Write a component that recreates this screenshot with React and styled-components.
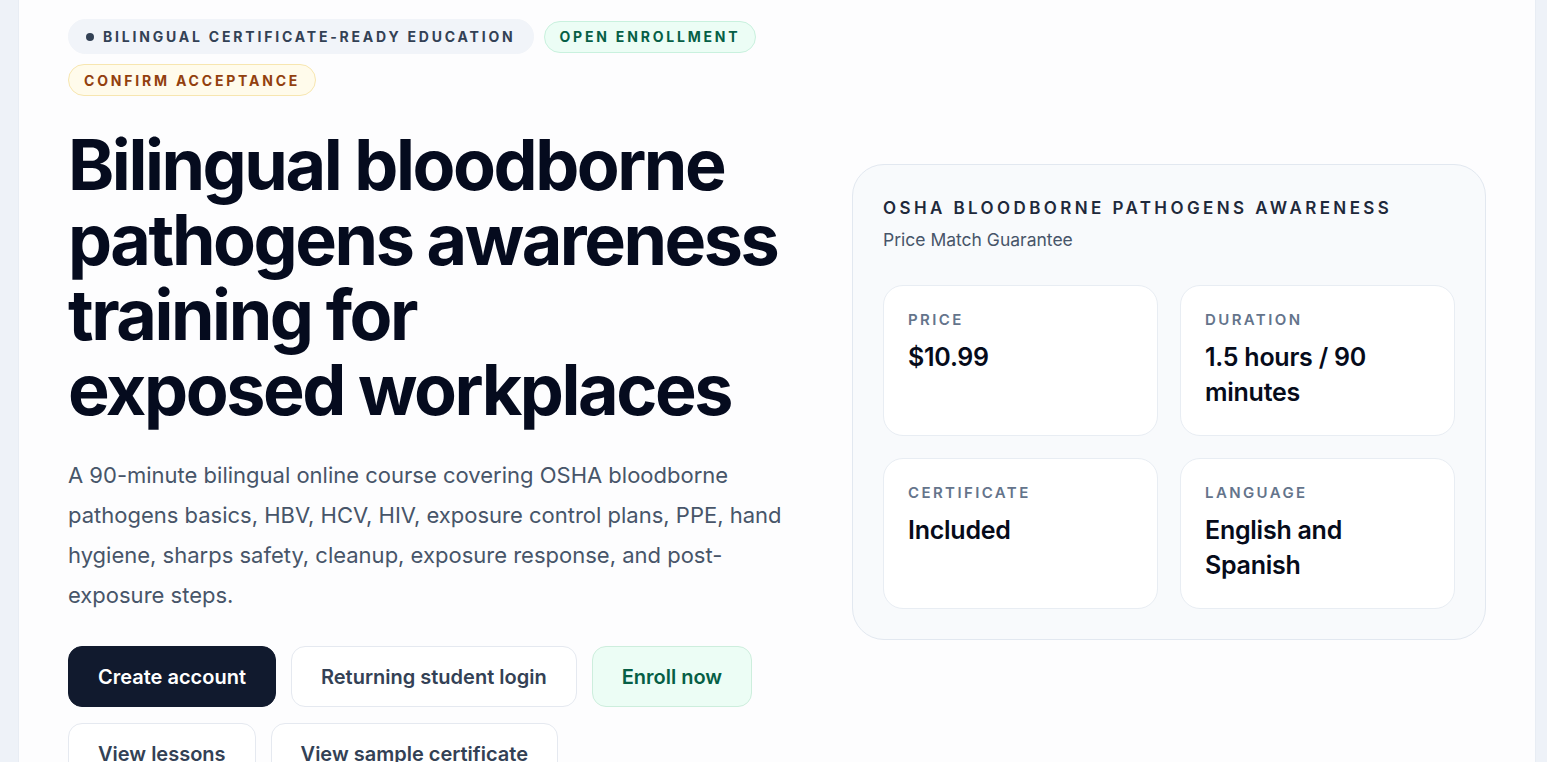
import React from "react";
import styled, { createGlobalStyle } from "styled-components";

const GlobalStyle = createGlobalStyle`
  * { box-sizing: border-box; }
  body {
    margin: 0;
    background: #eef2f8;
    font-family: Inter, "Noto Sans", "Liberation Sans", sans-serif;
    -webkit-font-smoothing: antialiased;
  }
`;

const Page = styled.div`
  padding: 0 11px 40px 18px;
`;

const Shell = styled.section`
  background: #fdfdfe;
  border: 1px solid #e8edf4;
  border-top: none;
  border-radius: 0 0 32px 32px;
  padding: 19px 49px 40px;
`;

const Hero = styled.div`
  display: grid;
  grid-template-columns: minmax(0, 1fr) 634px;
  column-gap: 60px;
  align-items: center;
`;

const Intro = styled.div`
  display: flex;
  flex-direction: column;
`;

const ChipRow = styled.div`
  display: flex;
  flex-wrap: wrap;
  gap: 10px;
  align-items: center;
`;

const tones = {
  slate: { bg: "#f1f4f9", border: "#f1f4f9", fg: "#334155" },
  green: { bg: "#ecfdf5", border: "#c9f1de", fg: "#065f46" },
  amber: { bg: "#fffbeb", border: "#f7e6b0", fg: "#92400e" },
};

const Chip = styled.span`
  display: inline-flex;
  align-items: center;
  gap: 9px;
  height: ${(p) => (p.$tone === "slate" ? "35px" : "32px")};
  padding: 0 ${(p) => (p.$tone === "slate" ? "17px" : "15px")};
  border-radius: 999px;
  background: ${(p) => tones[p.$tone].bg};
  border: 1px solid ${(p) => tones[p.$tone].border};
  color: ${(p) => tones[p.$tone].fg};
  font-size: 14px;
  font-weight: 700;
  letter-spacing: 0.2em;
  text-transform: uppercase;
  white-space: nowrap;
`;

const Dot = styled.span`
  width: 8px;
  height: 8px;
  border-radius: 50%;
  background: #334155;
`;

const Title = styled.h1`
  margin: 31px 0 0;
  font-size: 70px;
  line-height: 75px;
  font-weight: 700;
  letter-spacing: -0.035em;
  color: #050b1e;
`;

const Lead = styled.p`
  margin: 28px 0 0;
  font-size: 22px;
  line-height: 40px;
  color: #475569;
`;

const Actions = styled.div`
  display: flex;
  flex-wrap: wrap;
  gap: 16px 15px;
  margin-top: 31px;
  max-width: 700px;
`;

const buttonTones = {
  dark: { bg: "#111a2e", border: "#111a2e", fg: "#ffffff" },
  light: { bg: "#ffffff", border: "#e5e9f0", fg: "#334155" },
  mint: { bg: "#ecfdf5", border: "#cdeedd", fg: "#065f46" },
};

const Button = styled.button`
  height: 61px;
  padding: 0 29px;
  border-radius: 14px;
  font-family: inherit;
  font-size: 20px;
  font-weight: 600;
  cursor: pointer;
  background: ${(p) => buttonTones[p.$tone].bg};
  border: 1px solid ${(p) => buttonTones[p.$tone].border};
  color: ${(p) => buttonTones[p.$tone].fg};
`;

const Panel = styled.aside`
  background: #f8fafc;
  border: 1px solid #e2e8f0;
  border-radius: 32px;
  padding: 30px;
`;

const PanelTitle = styled.h2`
  margin: 0;
  font-size: 17px;
  line-height: 26px;
  font-weight: 600;
  letter-spacing: 0.2em;
  text-transform: uppercase;
  color: #1e293b;
`;

const PanelNote = styled.p`
  margin: 7px 0 0;
  font-size: 17.5px;
  line-height: 24px;
  color: #475569;
`;

const StatGrid = styled.div`
  display: grid;
  grid-template-columns: 1fr 1fr;
  gap: 22px;
  margin-top: 33px;
`;

const Stat = styled.div`
  background: #ffffff;
  border: 1px solid #e8edf3;
  border-radius: 20px;
  padding: 24px;
  min-height: 151px;
`;

const StatLabel = styled.div`
  font-size: 15px;
  line-height: 20px;
  font-weight: 600;
  letter-spacing: 0.16em;
  text-transform: uppercase;
  color: #64748b;
`;

const StatValue = styled.div`
  margin-top: 10px;
  font-size: 25px;
  line-height: 35px;
  font-weight: 600;
  letter-spacing: -0.01em;
  color: #060b1a;
`;

const stats = [
  { label: "Price", value: "$10.99" },
  { label: "Duration", value: "1.5 hours / 90 minutes" },
  { label: "Certificate", value: "Included" },
  { label: "Language", value: "English and Spanish" },
];

export default function App() {
  return (
    <>
      <GlobalStyle />
      <Page>
        <Shell>
          <Hero>
            <Intro>
              <ChipRow>
                <Chip $tone="slate">
                  <Dot />
                  Bilingual certificate-ready education
                </Chip>
                <Chip $tone="green">Open enrollment</Chip>
                <Chip $tone="amber">Confirm acceptance</Chip>
              </ChipRow>
              <Title>
                Bilingual bloodborne pathogens awareness training for
                <br />
                exposed workplaces
              </Title>
              <Lead>
                A 90-minute bilingual online course covering OSHA bloodborne
                pathogens basics, HBV, HCV, HIV, exposure control plans, PPE,
                hand hygiene, sharps safety, cleanup, exposure response, and
                post-exposure steps.
              </Lead>
              <Actions>
                <Button $tone="dark">Create account</Button>
                <Button $tone="light">Returning student login</Button>
                <Button $tone="mint">Enroll now</Button>
                <Button $tone="light">View lessons</Button>
                <Button $tone="light">View sample certificate</Button>
              </Actions>
            </Intro>
            <Panel>
              <PanelTitle>OSHA Bloodborne Pathogens Awareness</PanelTitle>
              <PanelNote>Price Match Guarantee</PanelNote>
              <StatGrid>
                {stats.map((s) => (
                  <Stat key={s.label}>
                    <StatLabel>{s.label}</StatLabel>
                    <StatValue>{s.value}</StatValue>
                  </Stat>
                ))}
              </StatGrid>
            </Panel>
          </Hero>
        </Shell>
      </Page>
    </>
  );
}
